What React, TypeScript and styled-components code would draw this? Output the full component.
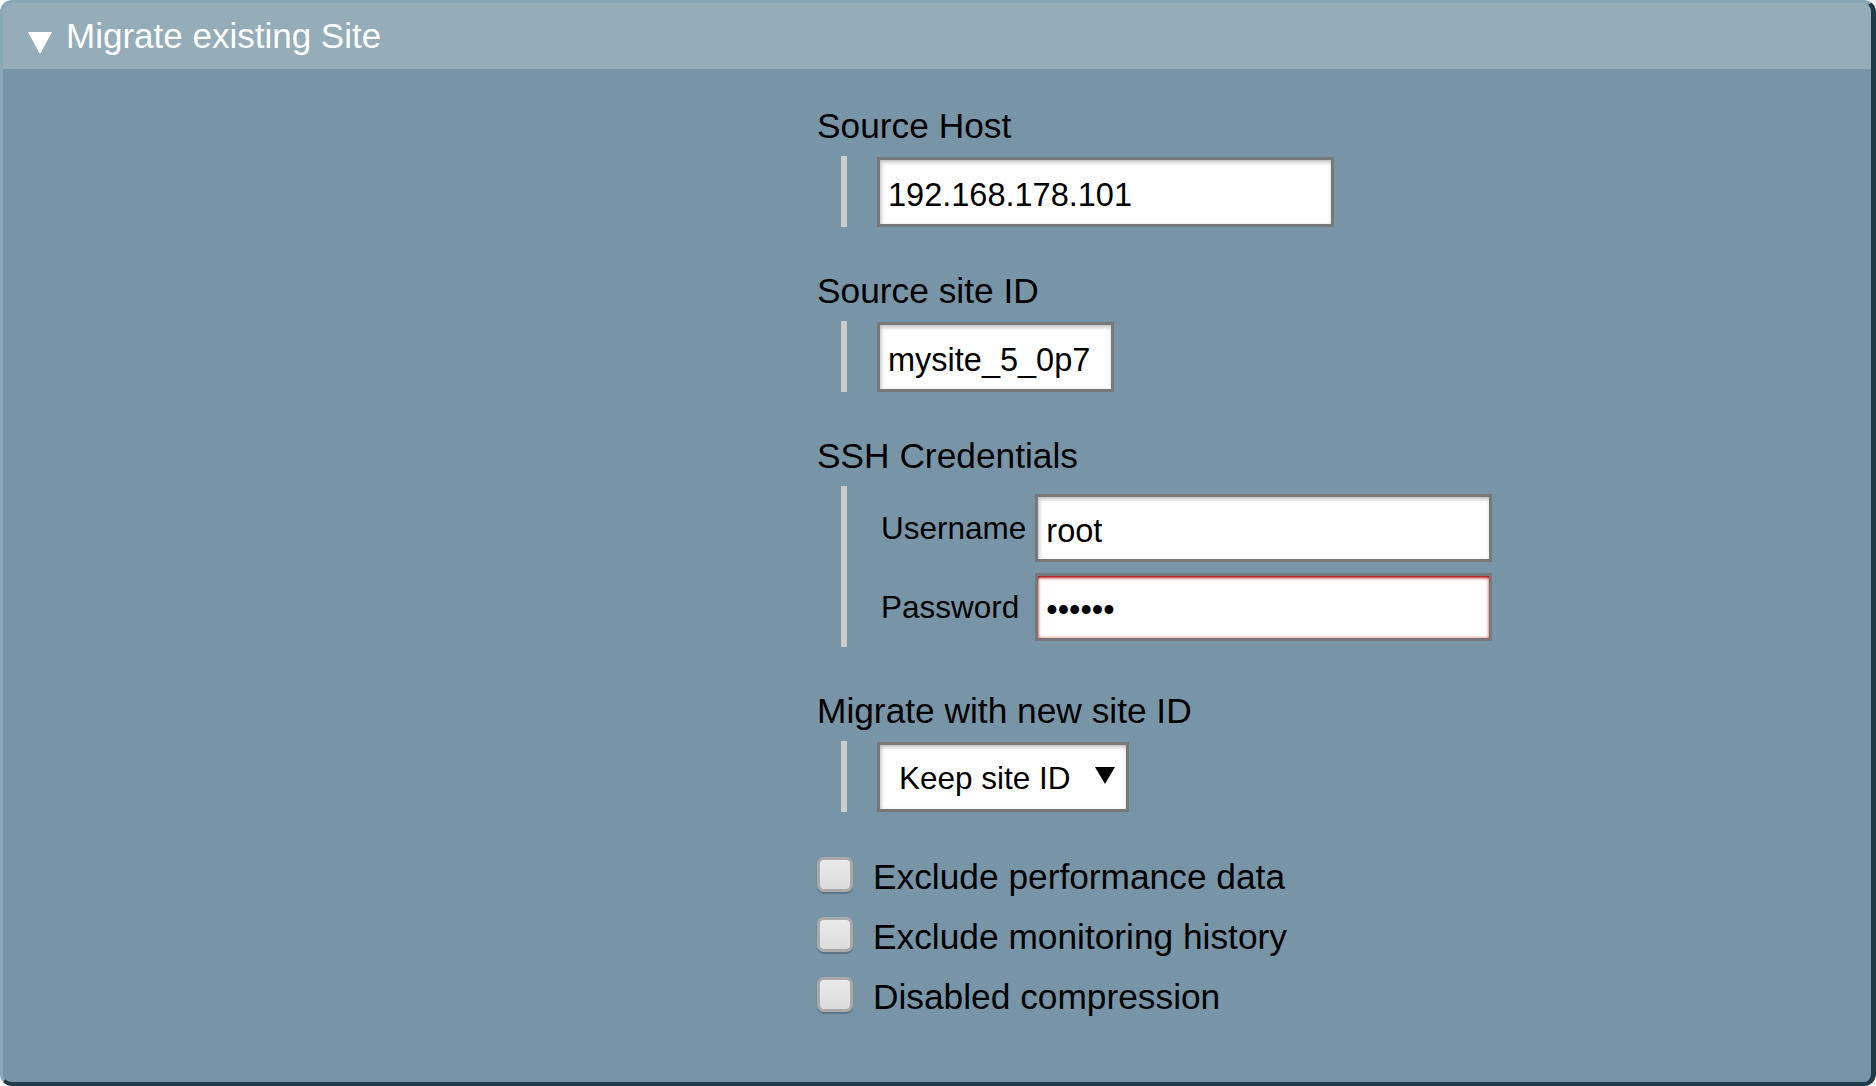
import React from "react";
import styled, { createGlobalStyle } from "styled-components";

const Global = createGlobalStyle`
  html, body { margin: 0; padding: 0; background: #ffffff; }
  body { font-family: "Liberation Sans", Arial, sans-serif; }
  * { box-sizing: border-box; }
`;

const Panel = styled.div`
  width: 100%;
  height: 1086px;
  background: #7895a7;
  border-top: 3px solid #88a7b7;
  border-left: 3px solid #88a7b7;
  border-right: 5px solid #1f3a48;
  border-bottom: 4px solid #1f3a48;
  border-radius: 12px;
  overflow: hidden;
  display: flex;
  flex-direction: column;
`;

const Header = styled.div`
  height: 66px;
  flex: 0 0 66px;
  background: #95acb9;
  display: flex;
  align-items: center;
  padding-left: 25px;
  gap: 14px;
`;

const Caret = styled.span`
  width: 0;
  height: 0;
  border-left: 12.5px solid transparent;
  border-right: 12.5px solid transparent;
  border-top: 22px solid #ffffff;
  margin-top: 13px;
`;

const Title = styled.span`
  color: #ffffff;
  font-size: 35px;
  line-height: 40px;
`;

const Form = styled.div`
  display: flex;
  flex-direction: column;
  gap: 44px;
  padding: 37px 0 0 814px;
`;

const Section = styled.div`
  display: flex;
  flex-direction: column;
  gap: 10px;
`;

const Label = styled.div`
  font-size: 35.3px;
  line-height: 40px;
  color: #000;
`;

const Group = styled.div<{ $pt: number; $pb: number; $pl: number }>`
  margin-left: 24px;
  border-left: 6px solid #cdcdcd;
  padding: ${(p) => p.$pt}px 0 ${(p) => p.$pb}px ${(p) => p.$pl}px;
`;

const TextInput = styled.input<{ $w: number; $h: number; $error?: boolean }>`
  display: block;
  width: ${(p) => p.$w}px;
  height: ${(p) => p.$h}px;
  border: 3px solid #787878;
  background: #ffffff;
  font-family: "Liberation Sans", Arial, sans-serif;
  font-size: 32.5px;
  color: #000;
  padding: 6px 8px 0 8px;
  margin: 0;
  outline: none;
  box-shadow: ${(p) =>
    p.$error
      ? "inset 0 3px 3px -1px rgba(170,0,0,0.95), inset 2px 0 3px -1px rgba(200,0,0,0.4), inset -2px 0 3px -1px rgba(200,0,0,0.3), inset 0 -2px 3px -1px rgba(200,0,0,0.25)"
      : "inset 1px 2px 4px rgba(0,0,0,0.28)"};
`;

const CredGrid = styled.div`
  display: grid;
  grid-template-columns: max-content 457px;
  justify-content: start;
  column-gap: 9px;
  row-gap: 11px;
  align-items: center;
`;

const CredLabel = styled.span`
  font-size: 31.5px;
  color: #000;
`;

const SelectBox = styled.div`
  width: 252px;
  height: 70px;
  border: 3px solid #787878;
  background: #ffffff;
  box-shadow: inset 1px 2px 4px rgba(0,0,0,0.28);
  display: flex;
  align-items: center;
  justify-content: space-between;
  padding: 2px 11px 0 19px;
  font-size: 31.5px;
  color: #000;
`;

const SelectArrow = styled.span`
  width: 0;
  height: 0;
  border-left: 10.5px solid transparent;
  border-right: 10.5px solid transparent;
  border-top: 17px solid #000;
  margin-top: -6px;
`;

const CheckList = styled.div`
  display: flex;
  flex-direction: column;
  gap: 10px;
  margin-top: -4px;
`;

const CheckRow = styled.label`
  display: flex;
  align-items: center;
  gap: 20px;
  height: 50px;
  font-size: 35.3px;
  color: #000;
`;

const Box = styled.span`
  width: 36px;
  height: 35px;
  border: 3px solid #a9a9a9;
  border-radius: 7px;
  background: linear-gradient(#e9e9e9, #dcdcdc);
  box-shadow: 0 2px 1px rgba(60, 80, 95, 0.45);
  margin-top: -6px;
`;

const checks = [
  "Exclude performance data",
  "Exclude monitoring history",
  "Disabled compression",
];

export default function App() {
  return (
    <>
      <Global />
      <Panel>
        <Header>
          <Caret />
          <Title>Migrate existing Site</Title>
        </Header>
        <Form>
          <Section>
            <Label>Source Host</Label>
            <Group $pt={1} $pb={0} $pl={30}>
              <TextInput $w={457} $h={70} readOnly value="192.168.178.101" />
            </Group>
          </Section>
          <Section>
            <Label>Source site ID</Label>
            <Group $pt={1} $pb={0} $pl={30}>
              <TextInput $w={237} $h={70} readOnly value="mysite_5_0p7" />
            </Group>
          </Section>
          <Section>
            <Label>SSH Credentials</Label>
            <Group $pt={8} $pb={6} $pl={34}>
              <CredGrid>
                <CredLabel>Username</CredLabel>
                <TextInput $w={457} $h={68} readOnly value="root" />
                <CredLabel>Password</CredLabel>
                <TextInput $w={457} $h={68} $error type="password" readOnly value="secret" />
              </CredGrid>
            </Group>
          </Section>
          <Section>
            <Label>Migrate with new site ID</Label>
            <Group $pt={1} $pb={0} $pl={30}>
              <SelectBox>
                <span>Keep site ID</span>
                <SelectArrow />
              </SelectBox>
            </Group>
          </Section>
          <CheckList>
            {checks.map((c) => (
              <CheckRow key={c}>
                <Box />
                <span>{c}</span>
              </CheckRow>
            ))}
          </CheckList>
        </Form>
      </Panel>
    </>
  );
}
